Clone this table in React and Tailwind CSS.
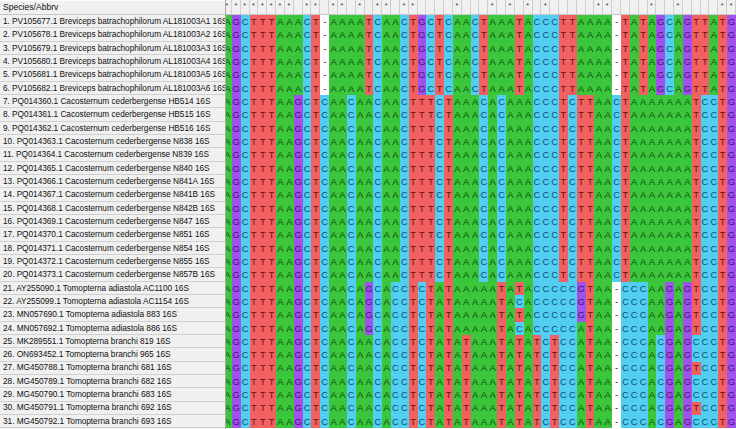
import React from "react";

const R1 = "AGCTTTAAACT-AAAATCAACTGCTCAAC" + "TAAATACCCTTAAAA-TATAGCAGTTATG";
const R7 = "AGCTTTAAGCTCAACAACAACTTTCTAAA" + "CACAAACCCTCTTAACTAAAAAAATCCTG";
const R21 = "AGCTTTAAGCTCAACAGCACCTCTATAAA" + "AATATACCCCCGTAA-CCCAAGAGTCCTG";
const R22 = "AGCTTTAAGCTCAACAGCACCTCTATAAA" + "AATACACCCCCGTAA-CCCAAGAGTCCTG";
const R24 = "AGCTTTAAGCTCAACAGCACCTCTATAAA" + "AATACACCCCCATAA-CCCAAGAGTCCTG";
const R25 = "AGCTTTAAGCTCAACAACACCTCTATATA" + "AATATATCTCCATAA-CCCACGAGCCCTG";
const R27 = "AGCTTTAAGCTCAACAACACCTCTATATA" + "AATATATCTCCATAA-CCCACGAGTCCTG";

const rows = [
  ["1. PV105677.1 Breviceps batrachophilorum AL181003A1 16S", R1],
  ["2. PV105678.1 Breviceps batrachophilorum AL181003A2 16S", R1],
  ["3. PV105679.1 Breviceps batrachophilorum AL181003A3 16S", R1],
  ["4. PV105680.1 Breviceps batrachophilorum AL181003A4 16S", R1],
  ["5. PV105681.1 Breviceps batrachophilorum AL181003A5 16S", R1],
  ["6. PV105682.1 Breviceps batrachophilorum AL181003A6 16S", R1],
  ["7. PQ014360.1 Cacosternum cederbergense HB514 16S", R7],
  ["8. PQ014361.1 Cacosternum cederbergense HB515 16S", R7],
  ["9. PQ014362.1 Cacosternum cederbergense HB516 16S", R7],
  ["10. PQ014363.1 Cacosternum cederbergense N838 16S", R7],
  ["11. PQ014364.1 Cacosternum cederbergense N839 16S", R7],
  ["12. PQ014365.1 Cacosternum cederbergense N840 16S", R7],
  ["13. PQ014366.1 Cacosternum cederbergense N841A 16S", R7],
  ["14. PQ014367.1 Cacosternum cederbergense N841B 16S", R7],
  ["15. PQ014368.1 Cacosternum cederbergense N842B 16S", R7],
  ["16. PQ014369.1 Cacosternum cederbergense N847 16S", R7],
  ["17. PQ014370.1 Cacosternum cederbergense N851 16S", R7],
  ["18. PQ014371.1 Cacosternum cederbergense N854 16S", R7],
  ["19. PQ014372.1 Cacosternum cederbergense N855 16S", R7],
  ["20. PQ014373.1 Cacosternum cederbergense N857B 16S", R7],
  ["21. AY255090.1 Tomopterna adiastola AC1100 16S", R21],
  ["22. AY255099.1 Tomopterna adiastola AC1154 16S", R22],
  ["23. MN057690.1 Tomopterna adiastola 883 16S", R21],
  ["24. MN057692.1 Tomopterna adiastola 886 16S", R24],
  ["25. MK289551.1 Tomopterna branchi 819 16S", R25],
  ["26. ON693452.1 Tomopterna branchi 965 16S", R25],
  ["27. MG450788.1 Tomopterna branchi 681 16S", R27],
  ["28. MG450789.1 Tomopterna branchi 682 16S", R25],
  ["29. MG450790.1 Tomopterna branchi 683 16S", R25],
  ["30. MG450791.1 Tomopterna branchi 692 16S", R27],
  ["31. MG450792.1 Tomopterna branchi 693 16S", R25],
];

const N = R1.length;
const conserved = Array.from({ length: N }, (_, i) =>
  rows.every(([, s]) => s[i] === rows[0][1][i]) && rows[0][1][i] !== "-"
);

const baseCls = {
  A: "bg-[#3cc63c] text-[#0b4d0b]",
  C: "bg-[#52cef3] text-[#0d4f6e]",
  G: "bg-[#a252ec] text-[#4a1178]",
  T: "bg-[#f16161] text-[#6e1010]",
  "-": "bg-white text-[#222222]",
};

function Cell({ b }) {
  return (
    <div
      className={
        "w-[8.85px] shrink-0 h-full flex items-center justify-center text-[9.4px] leading-none " +
        baseCls[b]
      }
    >
      {b}
    </div>
  );
}

export default function App() {
  return (
    <div className="w-[736px] h-[429px] overflow-hidden bg-[#f0f0f0] flex font-['Liberation_Sans',Arial,sans-serif]">
      <div className="w-[226px] shrink-0 flex flex-col border-r border-[#a8a8a8] overflow-hidden">
        <div className="h-[15px] shrink-0 flex items-center pl-[3px] text-[8.6px] text-[#111111] bg-[#f0f0f0] border-b border-[#c8c8c8] border-t border-t-white">
          Species/Abbrv
        </div>
        {rows.map(([name]) => (
          <div
            key={name}
            className="h-[13.33px] shrink-0 flex items-center pl-[3px] text-[8.3px] tracking-[-0.05px] text-[#111111] whitespace-nowrap bg-[#f0f0f0] border-b border-[#d0d0d0]"
          >
            {name}
          </div>
        ))}
      </div>
      <div className="flex-1 overflow-hidden flex flex-col bg-white">
        <div className="h-[15px] shrink-0 flex ml-[-3px] bg-[#f0f0f0] border-b border-[#c8c8c8]">
          {conserved.map((c, i) => (
            <div
              key={i}
              className="w-[8.85px] shrink-0 h-full border-r border-[#cfcfcf] flex justify-center pt-[2px] text-[7px] leading-none text-[#333333]"
            >
              {c ? "*" : ""}
            </div>
          ))}
        </div>
        {rows.map(([name, seq]) => (
          <div key={name} className="h-[13.33px] shrink-0 flex ml-[-3px]">
            {seq.split("").map((b, i) => (
              <Cell key={i} b={b} />
            ))}
          </div>
        ))}
      </div>
    </div>
  );
}
